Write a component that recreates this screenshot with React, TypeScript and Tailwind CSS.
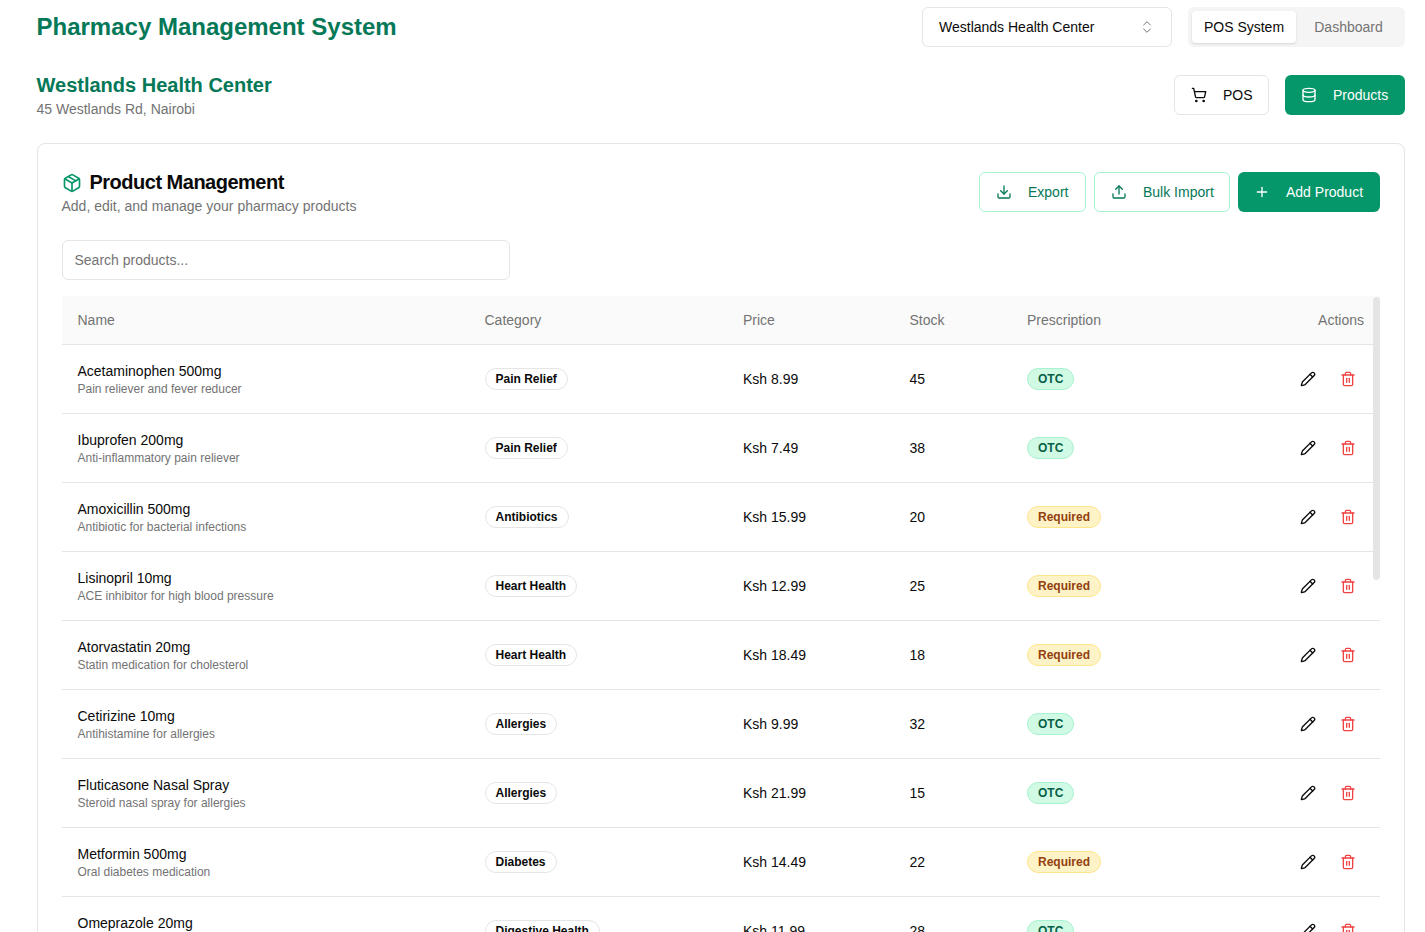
import React from "react";
import { ChevronsUpDown, Database, Download, Package, Pencil, Plus, ShoppingCart, Trash2, Upload } from "lucide-react";

const products = [
  { name: "Acetaminophen 500mg", desc: "Pain reliever and fever reducer", category: "Pain Relief", price: "Ksh 8.99", stock: 45, rx: false },
  { name: "Ibuprofen 200mg", desc: "Anti-inflammatory pain reliever", category: "Pain Relief", price: "Ksh 7.49", stock: 38, rx: false },
  { name: "Amoxicillin 500mg", desc: "Antibiotic for bacterial infections", category: "Antibiotics", price: "Ksh 15.99", stock: 20, rx: true },
  { name: "Lisinopril 10mg", desc: "ACE inhibitor for high blood pressure", category: "Heart Health", price: "Ksh 12.99", stock: 25, rx: true },
  { name: "Atorvastatin 20mg", desc: "Statin medication for cholesterol", category: "Heart Health", price: "Ksh 18.49", stock: 18, rx: true },
  { name: "Cetirizine 10mg", desc: "Antihistamine for allergies", category: "Allergies", price: "Ksh 9.99", stock: 32, rx: false },
  { name: "Fluticasone Nasal Spray", desc: "Steroid nasal spray for allergies", category: "Allergies", price: "Ksh 21.99", stock: 15, rx: false },
  { name: "Metformin 500mg", desc: "Oral diabetes medication", category: "Diabetes", price: "Ksh 14.49", stock: 22, rx: true },
  { name: "Omeprazole 20mg", desc: "Acid reflux medication", category: "Digestive Health", price: "Ksh 11.99", stock: 28, rx: false },
];

export default function App() {
  return (
    <div className="h-screen overflow-hidden bg-white pl-[36.5px] pr-5 pt-[7px] font-['Liberation_Sans',Arial,sans-serif] text-sm text-[#0a0a0a]">
      {/* Top bar */}
      <div className="flex items-center justify-between">
        <h1 className="text-2xl font-bold text-[#047857]">Pharmacy Management System</h1>
        <div className="flex items-center gap-4">
          <div className="flex h-10 w-[250px] items-center justify-between rounded-md border border-[#e5e5e5] px-4">
            <span>Westlands Health Center</span>
            <ChevronsUpDown className="h-4 w-4 text-[#737373]" strokeWidth={1.5} />
          </div>
          <div className="flex h-10 w-[217px] items-center rounded-md bg-[#f5f5f5] p-1">
            <div className="flex h-8 w-[104px] items-center justify-center rounded-sm bg-white shadow-sm">POS System</div>
            <div className="flex h-8 flex-1 items-center justify-center text-[#737373]">Dashboard</div>
          </div>
        </div>
      </div>

      {/* Location */}
      <div className="mt-[28px] flex items-start justify-between">
        <div>
          <h2 className="text-xl font-bold leading-[21px] text-[#047857]">Westlands Health Center</h2>
          <p className="mt-[3px] leading-5 text-[#737373]">45 Westlands Rd, Nairobi</p>
        </div>
        <div className="flex gap-4">
          <button className="flex h-10 w-[95px] items-center gap-4 rounded-md border border-[#e5e5e5] bg-white pl-4">
            <ShoppingCart className="h-4 w-4" strokeWidth={2} />
            POS
          </button>
          <button className="flex h-10 w-[120px] items-center gap-4 rounded-md bg-[#059669] pl-4 text-white">
            <Database className="h-4 w-4" strokeWidth={2} />
            Products
          </button>
        </div>
      </div>

      {/* Card */}
      <div className="mt-6 rounded-lg border border-[#e5e5e5] bg-white px-6 pt-7">
        <div className="flex items-start justify-between">
          <div>
            <div className="flex items-center gap-2">
              <Package className="h-5 w-5 text-[#059669]" strokeWidth={2} />
              <h3 className="text-xl font-bold leading-[21px] tracking-[-0.5px] text-[#0a0a0a]">Product Management</h3>
            </div>
            <p className="mt-[3px] leading-5 text-[#737373]">Add, edit, and manage your pharmacy products</p>
          </div>
          <div className="flex gap-2">
            <button className="flex h-10 w-[107px] items-center gap-4 rounded-md border border-[#a7f3d0] bg-white pl-4 text-[#047857]">
              <Download className="h-4 w-4" />
              Export
            </button>
            <button className="flex h-10 w-[136px] items-center gap-4 rounded-md border border-[#a7f3d0] bg-white pl-4 text-[#047857]">
              <Upload className="h-4 w-4" />
              Bulk Import
            </button>
            <button className="flex h-10 w-[142px] items-center gap-4 rounded-md bg-[#059669] pl-4 text-white">
              <Plus className="h-4 w-4" />
              Add Product
            </button>
          </div>
        </div>

        <div className="mt-6 flex h-10 w-[448px] items-center rounded-md border border-[#e5e5e5] px-3 text-[#737373]">Search products...</div>

        {/* Table */}
        <div className="relative mt-4">
          <table className="w-full table-fixed border-collapse">
            <colgroup>
              <col className="w-[407px]" />
              <col className="w-[258.5px]" />
              <col className="w-[166.5px]" />
              <col className="w-[117.5px]" />
              <col className="w-[170px]" />
              <col />
            </colgroup>
            <thead>
              <tr className="h-[48px] border-b border-[#e5e5e5] bg-[#fafafa] text-[#737373]">
                <th className="px-4 text-left font-normal">Name</th>
                <th className="px-4 text-left font-normal">Category</th>
                <th className="px-4 text-left font-normal">Price</th>
                <th className="px-4 text-left font-normal">Stock</th>
                <th className="px-4 text-left font-normal">Prescription</th>
                <th className="px-4 text-right font-normal">Actions</th>
              </tr>
            </thead>
            <tbody>
              {products.map((p) => (
                <tr key={p.name} className="h-[69px] border-b border-[#e5e5e5]">
                  <td className="px-4">
                    <div className="leading-5">{p.name}</div>
                    <div className="text-xs leading-4 text-[#737373]">{p.desc}</div>
                  </td>
                  <td className="px-4">
                    <span className="inline-flex h-[22px] items-center rounded-full border border-[#e5e5e5] px-[10px] text-xs font-bold">{p.category}</span>
                  </td>
                  <td className="px-4">{p.price}</td>
                  <td className="px-4">{p.stock}</td>
                  <td className="px-4">
                    {p.rx ? (
                      <span className="inline-flex h-[22px] items-center rounded-full border border-[#fde68a] bg-[#fef3c7] px-[10px] text-xs font-bold text-[#92400e]">Required</span>
                    ) : (
                      <span className="inline-flex h-[22px] items-center rounded-full border border-[#a7f3d0] bg-[#d1fae5] px-[10px] text-xs font-bold text-[#065f46]">OTC</span>
                    )}
                  </td>
                  <td className="px-4">
                    <div className="flex items-center justify-end gap-6 pr-[8px]">
                      <Pencil className="h-4 w-4" strokeWidth={2} />
                      <Trash2 className="h-4 w-4 text-[#ef4444]" strokeWidth={2} />
                    </div>
                  </td>
                </tr>
              ))}
            </tbody>
          </table>
          {/* Overlay scrollbar */}
          <div className="absolute right-0 top-[1px] h-[283px] w-[7px] rounded-full bg-[#e5e5e5]" />
        </div>
      </div>
    </div>
  );
}
